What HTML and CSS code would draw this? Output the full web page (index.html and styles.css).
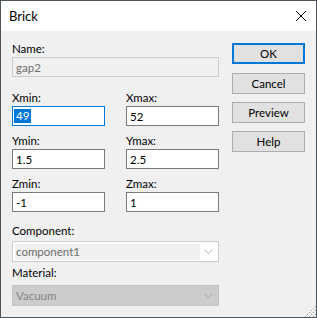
FILE: index.html
```html
<!DOCTYPE html>
<html lang="en">
<head>
    <meta charset="UTF-8">
    <meta name="viewport" content="width=device-width, initial-scale=1.0">
    <title>Brick</title>
    <link rel="stylesheet" href="styles.css">
</head>
<body>
    <div class="dialog">
        <div class="titlebar">
            <span class="title">Brick</span>
            <button class="close" title="Close">
                <svg width="12" height="12" viewBox="0 0 12 12">
                    <path d="M1 1 L11 11 M11 1 L1 11" stroke="#000" stroke-width="1" fill="none"/>
                </svg>
            </button>
        </div>

        <div class="content">
            <div class="form">
                <div class="label">Name:</div>
                <div class="field disabled">gap2</div>

                <!-- coordinates of the brick -->
                <div class="coords">
                    <div>
                        <div class="label">Xmin:</div>
                        <div class="field focused"><span class="selected">49</span></div>
                    </div>
                    <div>
                        <div class="label">Xmax:</div>
                        <div class="field">52</div>
                    </div>
                    <div>
                        <div class="label">Ymin:</div>
                        <div class="field">1.5</div>
                    </div>
                    <div>
                        <div class="label">Ymax:</div>
                        <div class="field">2.5</div>
                    </div>
                    <div>
                        <div class="label">Zmin:</div>
                        <div class="field">-1</div>
                    </div>
                    <div>
                        <div class="label">Zmax:</div>
                        <div class="field">1</div>
                    </div>
                </div>

                <div class="label component-label">Component:</div>
                <div class="combo combo-edit">
                    <span class="combo-text">component1</span>
                    <svg class="chevron" width="9" height="5" viewBox="0 0 9 5">
                        <path d="M0.5 0.5 L4.5 4.5 L8.5 0.5" stroke="#b4b4b4" fill="none"/>
                    </svg>
                </div>

                <div class="label material-label">Material:</div>
                <div class="combo combo-list">
                    <span class="combo-text">Vacuum</span>
                    <svg class="chevron" width="9" height="5" viewBox="0 0 9 5">
                        <path d="M0.5 0.5 L4.5 4.5 L8.5 0.5" stroke="#a8a8a8" fill="none"/>
                    </svg>
                </div>
            </div>

            <div class="buttons">
                <button class="btn default">OK</button>
                <button class="btn">Cancel</button>
                <button class="btn">Preview</button>
                <button class="btn">Help</button>
            </div>
        </div>

        <svg class="grip" width="12" height="12" viewBox="0 0 12 12">
            <path d="M12 1 L1 12 M12 5 L5 12 M12 9 L9 12" stroke="#9a9a9a" stroke-width="1" stroke-dasharray="1.41 1.41" fill="none"/>
        </svg>
    </div>
</body>
</html>
```

FILE: styles.css
```css
body {
    margin: 0;
    padding: 0;
    font-family: Lato, "Liberation Sans", sans-serif;
    font-size: 11.5px;
    color: #000;
}

.dialog {
    position: relative;
    width: 317px;
    height: 318px;
    box-sizing: border-box;
    border: 1px solid #4d555c;
    background-color: #f0f0f0;
    overflow: hidden;
}

.titlebar {
    height: 30px;
    background: #fff;
    display: flex;
    align-items: center;
    justify-content: space-between;
}

.title {
    font-size: 13px;
    padding-left: 8px;
}

.close {
    width: 30px;
    height: 30px;
    border: none;
    background: none;
    padding: 0;
    display: flex;
    align-items: center;
    justify-content: center;
}

.content {
    display: flex;
    gap: 13px;
    padding: 10px 11px 0 11px;
}

.form {
    width: 207px;
    display: flex;
    flex-direction: column;
}

.label {
    line-height: 16px;
    height: 16px;
}

.field {
    height: 20px;
    box-sizing: border-box;
    border: 1px solid #7a7a7a;
    background: #fff;
    padding-left: 3px;
    display: flex;
    align-items: center;
}

.field.disabled {
    border-color: #cccccc;
    background: #f0f0f0;
    color: #6d6d6d;
}

.field.focused {
    border-color: #0078d7;
}

.selected {
    background: #0078d7;
    color: #fff;
    height: 14px;
    line-height: 14px;
    padding: 0 2px;
    margin-left: -2px;
}

.coords {
    margin-top: 13px;
    display: grid;
    grid-template-columns: 93px 93px;
    column-gap: 21px;
    row-gap: 7px;
}

.component-label {
    margin-top: 11px;
    margin-bottom: 2px;
}

.material-label {
    margin-top: 3px;
    margin-bottom: 4px;
}

.combo {
    height: 21px;
    box-sizing: border-box;
    border: 1px solid #cccccc;
    display: flex;
    align-items: center;
    justify-content: space-between;
    padding: 0 5px 0 2px;
    color: #6d6d6d;
}

.combo-edit {
    background: #fff;
}

.combo-edit .combo-text {
    background: #f0f0f0;
    width: 184px;
    height: 16px;
    line-height: 16px;
    padding-left: 1px;
}

.combo-list {
    background: #cccccc;
    border-color: #c4c4c4;
    color: #838383;
}

.combo-list .combo-text {
    padding-left: 1px;
}

.buttons {
    display: flex;
    flex-direction: column;
    gap: 8px;
    padding-top: 2px;
}

.btn {
    width: 73px;
    height: 21px;
    box-sizing: border-box;
    border: 1px solid #adadad;
    background: #e1e1e1;
    font-family: inherit;
    font-size: 11.5px;
    color: #000;
    padding: 0;
}

.btn.default {
    border: 2px solid #0078d7;
    margin-bottom: 1px;
}

.grip {
    position: absolute;
    right: 0;
    bottom: 0;
}
```
